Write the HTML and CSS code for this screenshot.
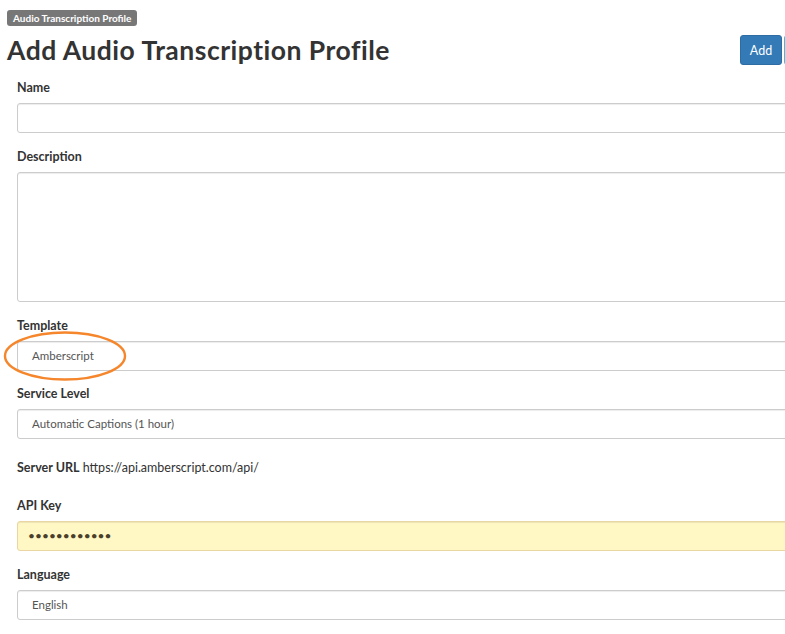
FILE: index.html
```html
<!DOCTYPE html>
<html>
<head>
<meta charset="utf-8">
<link rel="stylesheet" href="styles.css">
</head>
<body>
<div class="page">
  <div class="crumbs"><span class="badge">Audio Transcription Profile</span></div>
  <div class="header">
    <h1 class="title">Add Audio Transcription Profile</h1>
    <div class="actions">
      <button class="btn btn-primary">Add</button>
      <button class="btn btn-info" aria-label="Cancel"></button>
    </div>
  </div>
  <form class="form">
    <div class="group">
      <label class="label">Name</label>
      <div class="field"></div>
    </div>
    <div class="group">
      <label class="label">Description</label>
      <div class="field field-area"></div>
    </div>
    <div class="group group-mark">
      <label class="label">Template</label>
      <div class="field">Amberscript</div>
      <svg class="mark" width="126" height="54" viewBox="0 0 126 54">
        <ellipse cx="63" cy="26" rx="60" ry="23.5" fill="none" stroke="#f5862b" stroke-width="2.4"/>
      </svg>
    </div>
    <div class="group">
      <label class="label">Service Level</label>
      <div class="field">Automatic Captions (1 hour)</div>
    </div>
    <div class="group static"><b>Server URL</b> https://api.amberscript.com/api/</div>
    <div class="group">
      <label class="label">API Key</label>
      <div class="field field-key"><span class="dots">••••••••••••</span></div>
    </div>
    <div class="group">
      <label class="label">Language</label>
      <div class="field">English</div>
    </div>
  </form>
</div>
</body>
</html>
```
FILE: styles.css
```css
html, body {
  margin: 0;
  padding: 0;
  overflow: hidden;
  background: #fff;
}
body {
  font-family: Lato, "Liberation Sans", sans-serif;
  color: #333;
}
.page {
  width: 837px;
  padding: 10px 7px 0 7px;
}
.crumbs {
  display: flex;
}
.badge {
  display: block;
  background: #777;
  color: #fff;
  font-size: 10px;
  font-weight: 700;
  line-height: 16px;
  height: 16px;
  padding: 0 6px;
  border-radius: 3px;
}
.header {
  display: flex;
  justify-content: space-between;
  align-items: flex-start;
  margin-top: 9px;
}
.title {
  margin: 0;
  font-size: 26.5px;
  letter-spacing: 0.5px;
  font-weight: 700;
  line-height: 30px;
  color: #333;
}
.actions {
  display: flex;
  gap: 2px;
}
.btn {
  font-family: inherit;
  font-size: 12.5px;
  height: 30px;
  padding: 0;
  border-radius: 3px;
  color: #fff;
  cursor: pointer;
}
.btn-primary {
  background: #337ab7;
  border: 1px solid #2e6da4;
  width: 42px;
}
.btn-info {
  background: #5bc0de;
  border: 1px solid #46b8da;
  width: 60px;
}
.form {
  padding-left: 10px;
  margin-top: 14px;
}
.group {
  margin-bottom: 15px;
}
.group-mark {
  position: relative;
  margin-bottom: 14px;
}
.label {
  display: block;
  font-size: 12.5px;
  font-weight: 700;
  line-height: 18px;
  margin-bottom: 6px;
}
.field {
  height: 28px;
  border: 1px solid #ccc;
  border-radius: 3px;
  box-shadow: inset 0 1px 1px rgba(0,0,0,0.075);
  padding: 0 14px;
  font-size: 11.5px;
  line-height: 28px;
  color: #555;
}
.field-area {
  height: 128px;
}
.field-key {
  background: #fff7c4;
  border-color: #ead6a2;
  padding-left: 10px;
}
.dots {
  color: #4a3f2a;
  font-size: 12px;
}
.mark {
  position: absolute;
  left: -15px;
  top: 13px;
}
.static {
  padding: 5px 0 5px;
  font-size: 12.5px;
  line-height: 18px;
}
```
